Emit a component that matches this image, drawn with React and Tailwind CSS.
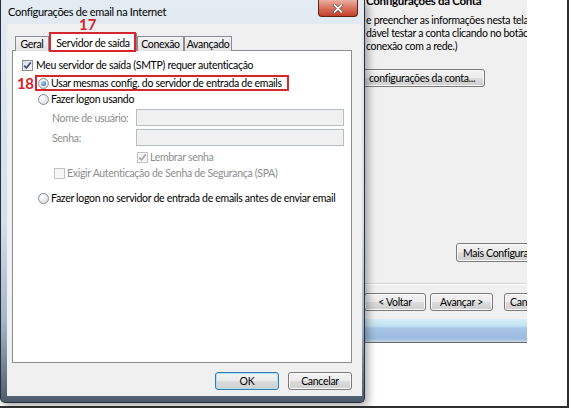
import React from 'react';

function Check({ checked, disabled }) {
  return (
    <span
      className={`flex h-[11px] w-[11px] shrink-0 items-center justify-center border ${
        disabled ? 'border-[#c2c2c2] bg-[#f6f6f6]' : 'border-[#8b8e92] bg-[linear-gradient(135deg,#d9dce0,#ffffff)]'
      }`}
    >
      {checked && (
        <svg viewBox="0 0 9 9" className="h-[9px] w-[9px]">
          <path d="M1.2 4.6 L3.4 7 L7.8 1.4" fill="none" stroke={disabled ? '#a9a9a9' : '#3b4f80'} strokeWidth="1.7" />
        </svg>
      )}
    </span>
  );
}

function Radio({ checked }) {
  return (
    <span className="flex h-[11px] w-[11px] shrink-0 items-center justify-center rounded-full border border-[#8b8e92] bg-[radial-gradient(circle_at_35%_35%,#ffffff,#d2d5d9)]">
      {checked && <span className="h-[5px] w-[5px] rounded-full bg-[radial-gradient(circle_at_35%_35%,#a8dcff,#1b5aa6)]" />}
    </span>
  );
}

function WinButton({ children, primary, className = '' }) {
  return (
    <div
      className={`flex items-center justify-center whitespace-nowrap rounded-[3px] border bg-[linear-gradient(180deg,#f3f3f3_0%,#ebebeb_48%,#dcdcdc_52%,#cfcfcf_100%)] ${
        primary ? 'border-[#3a79ad] shadow-[inset_0_0_0_1px_#a8e4f6]' : 'border-[#7a7a7a] shadow-[inset_0_0_0_1px_#fbfbfb]'
      } ${className}`}
    >
      {children}
    </div>
  );
}

function Tab({ label, className = '' }) {
  return (
    <div
      className={`flex h-[15px] items-center justify-center border border-b-0 border-[#898c95] bg-[linear-gradient(180deg,#f4f4f4,#e2e2e2)] ${className}`}
    >
      {label}
    </div>
  );
}

function EmailDialog() {
  return (
    <div className="absolute left-0 top-0 z-10 h-[403px] w-[365px] rounded-b-[5px] border border-t-0 border-[#27303c] bg-[linear-gradient(180deg,#e3ebf3_0%,#d4dfea_55%,#a3b5ca_80%,#4d5b6d_100%)] shadow-[3px_3px_8px_rgba(0,0,0,0.35)]">
      <div className="flex h-[24px] items-center pl-[7px] text-[11px] text-black">Configurações de email na Internet</div>
      <div className="absolute right-[6px] top-0 flex h-[17px] w-[40px] items-center justify-center rounded-b-[4px] border border-t-0 border-[#5e2217] bg-[linear-gradient(180deg,#eab1a3_0%,#d8735f_50%,#c2402b_100%)]">
        <svg viewBox="0 0 10 9" className="h-[9px] w-[10px]">
          <path d="M1.5 1 L8.5 8 M8.5 1 L1.5 8" stroke="#5a2a22" strokeWidth="3" strokeLinecap="round" />
          <path d="M1.5 1 L8.5 8 M8.5 1 L1.5 8" stroke="#ffffff" strokeWidth="1.8" strokeLinecap="round" />
        </svg>
      </div>

      <div className="ml-[6px] flex h-[372px] w-[355px] flex-col bg-[#f0f0f0]">
        <div className="relative z-10 ml-[8px] mt-[9px] flex h-[18px] items-end">
          <Tab label="Geral" className="w-[34px]" />
          <div className="relative flex h-[18px] w-[88px] items-center justify-center border border-b-0 border-[#898c95] bg-white">
            Servidor de saída
            <div className="absolute -left-[1px] -top-[2px] -bottom-[1px] right-0 border-2 border-[#d6252c]" />
            <div className="absolute left-[29px] top-[-19px] text-[15px] font-bold leading-[18px] tracking-normal text-[#d6252c]">17</div>
          </div>
          <Tab label="Conexão" className="w-[47px]" />
          <Tab label="Avançado" className="w-[48px]" />
        </div>

        <div className="relative -mt-px ml-[5px] flex h-[313px] w-[340px] flex-col border border-[#898c95] bg-white pt-[6px]">
          <div className="absolute left-[4px] top-[23px] text-[15px] font-bold leading-[18px] tracking-[-0.5px] text-[#d6252c]">18</div>

          <div className="flex h-[16px] items-center gap-[3px] pl-[9px]">
            <Check checked />
            <span>Meu servidor de saída (SMTP) requer autenticação</span>
          </div>

          <div className="ml-[22px] mt-[2px] flex h-[16px] w-[254px] items-center gap-[2px] border-2 border-[#d6252c] pl-[1px]">
            <Radio checked />
            <span>Usar mesmas config. do servidor de entrada de emails</span>
          </div>

          <div className="flex h-[16px] items-center gap-[2px] pl-[25px]">
            <Radio />
            <span>Fazer logon usando</span>
          </div>

          <div className="mt-[2px] flex h-[17px] items-center">
            <span className="w-[123px] shrink-0 pl-[39px] text-[#8d8d8d]">Nome de usuário:</span>
            <div className="h-[17px] w-[208px] border border-[#b5bcc6] bg-[#f0f0f0]" />
          </div>

          <div className="mt-[3px] flex h-[17px] items-center">
            <span className="w-[123px] shrink-0 pl-[39px] text-[#8d8d8d]">Senha:</span>
            <div className="h-[17px] w-[208px] border border-[#b5bcc6] bg-[#f0f0f0]" />
          </div>

          <div className="mt-[3px] flex h-[16px] items-center gap-[2px] pl-[124px] text-[#8d8d8d]">
            <Check checked disabled />
            <span>Lembrar senha</span>
          </div>

          <div className="flex h-[16px] items-center gap-[2px] pl-[41px] text-[#8d8d8d]">
            <Check disabled />
            <span>Exigir Autenticação de Senha de Segurança (SPA)</span>
          </div>

          <div className="mt-[9px] flex h-[16px] items-center gap-[2px] pl-[25px]">
            <Radio />
            <span>Fazer logon no servidor de entrada de emails antes de enviar email</span>
          </div>
        </div>

        <div className="ml-[5px] mt-[9px] flex h-[18px] w-[340px] justify-end gap-[9px]">
          <WinButton primary className="w-[64px]">OK</WinButton>
          <WinButton className="w-[64px]">Cancelar</WinButton>
        </div>
      </div>
    </div>
  );
}

function WizardWindow() {
  return (
    <div className="absolute left-[330px] top-0 flex h-[343px] w-[197px] flex-col overflow-hidden border-b border-[#6a6a6a]">
      <div className="flex h-[320px] flex-col bg-[#f0f0f0] pl-[36px]">
        <div className="-mt-[7px] h-[16px] text-[11.5px] font-bold leading-[16px]">Configurações da Conta</div>
        <div className="mt-[5px] leading-[13px]">
          <div>e preencher as informações nesta tela,</div>
          <div>dável testar a conta clicando no botão</div>
          <div>conexão com a rede.)</div>
        </div>
        <WinButton className="-ml-[26px] mt-[16px] h-[18px] w-[145px] shrink-0 !justify-start pl-[28px]">
          configurações da conta...
        </WinButton>
        <WinButton className="ml-[90px] mt-[156px] h-[19px] w-[100px] shrink-0 !justify-start pl-[6px]">
          Mais Configurações...
        </WinButton>
        <div className="-ml-[36px] mt-[21px] h-[2px] shrink-0 border-t border-b border-t-[#d5d5d5] border-b-white" />
        <div className="-ml-[2px] mt-[8px] flex h-[18px] shrink-0">
          <WinButton className="w-[62px] shrink-0">&lt; Voltar</WinButton>
          <WinButton className="ml-[4px] w-[63px] shrink-0">Avançar &gt;</WinButton>
          <WinButton className="ml-[11px] w-[70px] shrink-0 !justify-start pl-[5px]">Cancelar</WinButton>
        </div>
      </div>
      <div className="h-[23px] bg-[linear-gradient(180deg,#d3eef7_0%,#c2e2f2_30%,#a9c6e6_40%,#9bbbe0_85%,#c9d6e4_100%)]" />
    </div>
  );
}

export default function App() {
  return (
    <div className="h-[410px] w-[571px] whitespace-nowrap bg-white font-['Lato',sans-serif] text-[10.5px] leading-[14px] tracking-[-0.3px] text-black">
      <div className="relative h-[408px] w-[569px] overflow-hidden border-b-2 border-r-2 border-[#2e2e2e]">
        <WizardWindow />
        <EmailDialog />
      </div>
    </div>
  );
}
